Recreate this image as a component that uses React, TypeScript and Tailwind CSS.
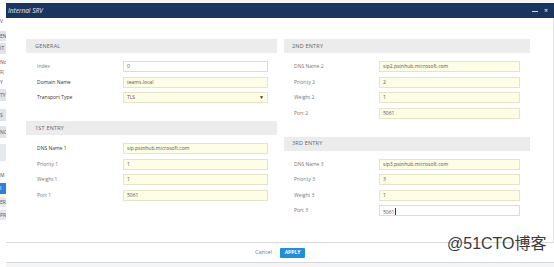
import React from 'react';

type Field = { label: string; value: string; strong?: boolean; white?: boolean; select?: boolean; cursor?: boolean };

const FONT = { fontFamily: '"Open Sans", "Noto Sans", sans-serif' };

const Row = ({ f, inputLeft, inputWidth }: { f: Field; inputLeft: number; inputWidth: number }) => (
  <div className="flex h-[11px] items-center">
    <div
      className={`text-[5px] leading-none ${f.strong ? 'text-[#333]' : 'text-[#777]'}`}
      style={{ width: inputLeft }}
    >
      {f.label}
    </div>
    <div
      className={`flex h-[11px] items-center justify-between border px-[3px] text-[5px] leading-none text-[#555] ${
        f.white ? 'border-[#dcdcdc] bg-white' : 'border-[#e6e4c8] bg-[#fefde6]'
      }`}
      style={{ width: inputWidth }}
    >
      <span>
        {f.value}
        {f.cursor && <span className="ml-[0.5px] inline-block h-[7px] w-[0.5px] translate-y-[1px] bg-[#333]" />}
      </span>
      {f.select && <span className="text-[5px] text-[#333]">▼</span>}
    </div>
  </div>
);

const Section = ({
  title,
  fields,
  labelPad,
  inputLeft,
  inputWidth,
  last,
}: {
  title: string;
  fields: Field[];
  labelPad: number;
  inputLeft: number;
  inputWidth: number;
  last?: boolean;
}) => (
  <div className={last ? '' : 'pb-[18px]'}>
    <div className="flex h-[14px] items-center bg-[#ececec] text-[5.5px] tracking-[0.2px] text-[#666]" style={{ paddingLeft: labelPad - 2 }}>
      {title}
    </div>
    <div className="flex flex-col gap-[4.5px] pt-[8px]" style={{ paddingLeft: labelPad }}>
      {fields.map((f) => (
        <Row key={f.label} f={f} inputLeft={inputLeft} inputWidth={inputWidth} />
      ))}
    </div>
  </div>
);

const strip: Array<{ h: number; mt: number; bg?: string; t?: string; c?: string }> = [
  { h: 6, mt: 18, t: 'V', c: '#2a4a7a' },
  { h: 10, mt: 7, bg: '#dfe4ea', t: 'EN' },
  { h: 11, mt: 2, bg: '#dfe4ea', t: 'IT' },
  { h: 6, mt: 5, t: 'No' },
  { h: 6, mt: 4, t: 'F(' },
  { h: 6, mt: 4, t: 'Y' },
  { h: 12, mt: 4, bg: '#dfe4ea', t: 'TY' },
  { h: 12, mt: 8, bg: '#dfe4ea', t: 'S' },
  { h: 12, mt: 5, bg: '#dfe4ea', t: 'NC' },
  { h: 17, mt: 6, bg: '#e6e9ee' },
  { h: 6, mt: 11, t: 'M' },
  { h: 11, mt: 5, bg: '#2f7ed8', t: 'I', c: '#fff' },
  { h: 10, mt: 3, bg: '#e4e8ee', t: 'ER' },
  { h: 10, mt: 3, bg: '#e4e8ee', t: 'PR' },
];

export default function App() {
  return (
    <div className="relative flex h-[267px] w-[554px] overflow-hidden bg-[#f4f5f7]" style={FONT}>
      {/* page behind the dialog */}
      <div className="flex w-[6px] shrink-0 flex-col bg-white">
        {strip.map((s, i) => (
          <div
            key={i}
            className="flex items-center overflow-hidden whitespace-nowrap text-[5px] leading-none"
            style={{ height: s.h, marginTop: s.mt, background: s.bg, color: s.c ?? '#556' }}
          >
            {s.t}
          </div>
        ))}
      </div>

      {/* dialog */}
      <div className="mt-[3px] flex flex-1 flex-col">
        <div className="flex h-[15px] items-center justify-between bg-[#18345f] pl-[2px] pr-[6px]">
          <span className="text-[6.5px] italic text-white/90">Internal SRV</span>
          <div className="flex items-center gap-[6px] text-white">
            <span className="mt-[1px] block h-[1px] w-[6px] bg-white/80" />
            <span className="text-[7px] leading-none">×</span>
          </div>
        </div>

        <div className="flex h-[224px] gap-[7px] border-r border-[#e2e2e2] bg-white pl-[20px] pt-[21px]">
          <div className="w-[251px]">
            <Section
              title="GENERAL"
              labelPad={11}
              inputLeft={86}
              inputWidth={145}
              fields={[
                { label: 'Index', value: '0', white: true },
                { label: 'Domain Name', value: 'teams.local', strong: true },
                { label: 'Transport Type', value: 'TLS', strong: true, select: true },
              ]}
            />
            <Section
              title="1ST ENTRY"
              labelPad={11}
              inputLeft={86}
              inputWidth={145}
              last
              fields={[
                { label: 'DNS Name 1', value: 'sip.pstnhub.microsoft.com', strong: true },
                { label: 'Priority 1', value: '1' },
                { label: 'Weight 1', value: '1' },
                { label: 'Port 1', value: '5061' },
              ]}
            />
          </div>
          <div className="w-[246px]">
            <Section
              title="2ND ENTRY"
              labelPad={10}
              inputLeft={85}
              inputWidth={141}
              fields={[
                { label: 'DNS Name 2', value: 'sip2.pstnhub.microsoft.com' },
                { label: 'Priority 2', value: '2' },
                { label: 'Weight 2', value: '1' },
                { label: 'Port 2', value: '5061' },
              ]}
            />
            <Section
              title="3RD ENTRY"
              labelPad={10}
              inputLeft={85}
              inputWidth={141}
              last
              fields={[
                { label: 'DNS Name 3', value: 'sip3.pstnhub.microsoft.com' },
                { label: 'Priority 3', value: '3' },
                { label: 'Weight 3', value: '1' },
                { label: 'Port 3', value: '5061', white: true, cursor: true },
              ]}
            />
          </div>
        </div>

        <div className="flex h-[21px] items-center justify-center gap-[8px] border-y border-[#d8d8d8] bg-white pl-[-2px]">
          <span className="text-[5.5px] text-[#4a7fb5]">Cancel</span>
          <span className="flex h-[10px] w-[25px] items-center justify-center rounded-[1px] bg-[#1e8ee0] text-[5px] font-bold text-white">
            APPLY
          </span>
        </div>
      </div>

      {/* watermark */}
      <div
        className="absolute left-[447px] top-[236px] text-[16px] leading-none text-[#3a3a3a]"
        style={{ fontFamily: '"Liberation Sans", "Noto Sans CJK SC", sans-serif' }}
      >
        @51CTO博客
      </div>
    </div>
  );
}
